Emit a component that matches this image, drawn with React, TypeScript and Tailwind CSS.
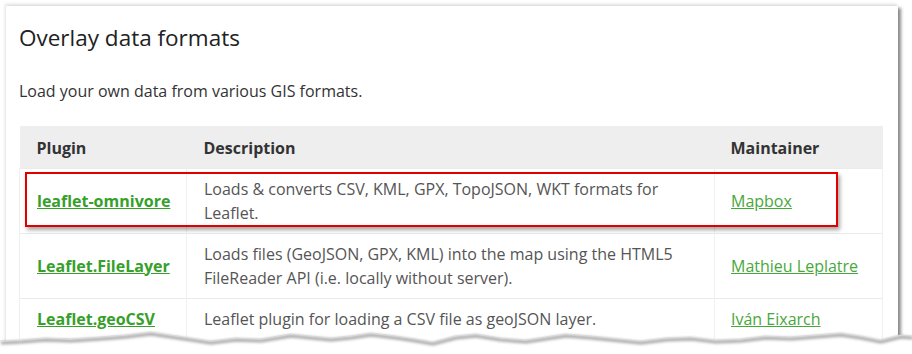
const green = '#36a02a';

const tear: [number, number][] = [
  [0, 341], [20, 340], [45, 338], [70, 339], [100, 337], [125, 335], [150, 332], [170, 335],
  [190, 338], [210, 341], [235, 338], [260, 339], [290, 334], [310, 336], [330, 338], [350, 336],
  [370, 333], [395, 336], [415, 339], [432, 342], [455, 336], [475, 334], [500, 338], [525, 340],
  [545, 337], [565, 334], [590, 336], [610, 338], [640, 341], [665, 338], [690, 337], [715, 340],
  [740, 339], [765, 336], [790, 337], [815, 335], [840, 333], [860, 336], [880, 340], [900, 335],
  [912, 336],
];

const rows = [
  {
    plugin: 'leaflet-omnivore',
    desc: 'Loads & converts CSV, KML, GPX, TopoJSON, WKT formats for Leaflet.',
    maintainer: 'Mapbox',
  },
  {
    plugin: 'Leaflet.FileLayer',
    desc: 'Loads files (GeoJSON, GPX, KML) into the map using the HTML5 FileReader API (i.e. locally without server).',
    maintainer: 'Mathieu Leplatre',
  },
  {
    plugin: 'Leaflet.geoCSV',
    desc: 'Leaflet plugin for loading a CSV file as geoJSON layer.',
    maintainer: 'Iván Eixarch',
  },
];

function TornEdge() {
  const top = 320;
  const line = tear.map(([x, y]) => `${x},${y - top}`).join(' L');
  return (
    <svg className="absolute left-0 top-[320px]" width={912} height={34} viewBox="0 0 912 34">
      <defs>
        <filter id="blur" x="-5%" y="-50%" width="110%" height="200%">
          <feGaussianBlur stdDeviation="1.4" />
        </filter>
      </defs>
      <path d={`M0,34 L${line} L912,34 Z`} fill="#ffffff" />
      <path
        d={`M${line}`}
        fill="none"
        stroke="#6e6e6e"
        strokeWidth={2.5}
        filter="url(#blur)"
        transform="translate(1,2)"
        opacity={0.75}
      />
      <path d={`M${line}`} fill="none" stroke="#d8d8d8" strokeWidth={0.8} />
    </svg>
  );
}

export default function App() {
  return (
    <div className="w-[912px] h-[354px] bg-white relative overflow-hidden pl-[6px] pt-[6px] font-['Open_Sans',sans-serif]">
      {/* Card */}
      <div className="w-[892px] h-[380px] bg-white relative px-[13px] shadow-[3px_2px_3px_rgba(0,0,0,0.45),-1px_-2px_3px_rgba(0,0,0,0.12)]">
        <h2 className="pt-[19px] text-[22.5px] leading-[26px] text-[#222]">Overlay data formats</h2>
        <p className="mt-[28px] text-[16px] leading-[24px] text-[#333]">
          Load your own data from various GIS formats.
        </p>

        <table className="mt-[23px] w-[863px] table-fixed border-collapse text-[16px] leading-[24px]">
          <colgroup>
            <col className="w-[167px]" />
            <col className="w-[528px]" />
            <col className="w-[168px]" />
          </colgroup>
          <thead>
            <tr className="h-[42px] bg-[#eeeeee] text-left text-[#333]">
              <th className="pl-[17px] pt-[2px] font-bold">Plugin</th>
              <th className="pl-[17px] pt-[2px] font-bold">Description</th>
              <th className="pl-[16px] pt-[2px] font-bold">Maintainer</th>
            </tr>
          </thead>
          <tbody>
            {rows.map((r) => (
              <tr key={r.plugin} className="border-t border-[#ebebeb]">
                <td className="border-l border-[#eeeeee] pl-[17px] py-[8px] align-middle">
                  <a href="#" className="font-bold underline" style={{ color: green }}>
                    {r.plugin}
                  </a>
                </td>
                <td className="border-l border-[#f0f0f0] pl-[17px] pr-[18px] py-[8px] text-[#555] align-middle">
                  {r.desc}
                </td>
                <td className="border-l border-r border-[#f0f0f0] pl-[16px] py-[8px] align-middle">
                  <a href="#" className="underline text-[#47a83a]">
                    {r.maintainer}
                  </a>
                </td>
              </tr>
            ))}
          </tbody>
        </table>

        {/* Highlight box */}
        <div className="absolute left-[19px] top-[166px] w-[813px] h-[55px] border-2 border-[#e00000] shadow-[2px_3px_4px_rgba(0,0,0,0.35)]" />
      </div>

      <TornEdge />
    </div>
  );
}
